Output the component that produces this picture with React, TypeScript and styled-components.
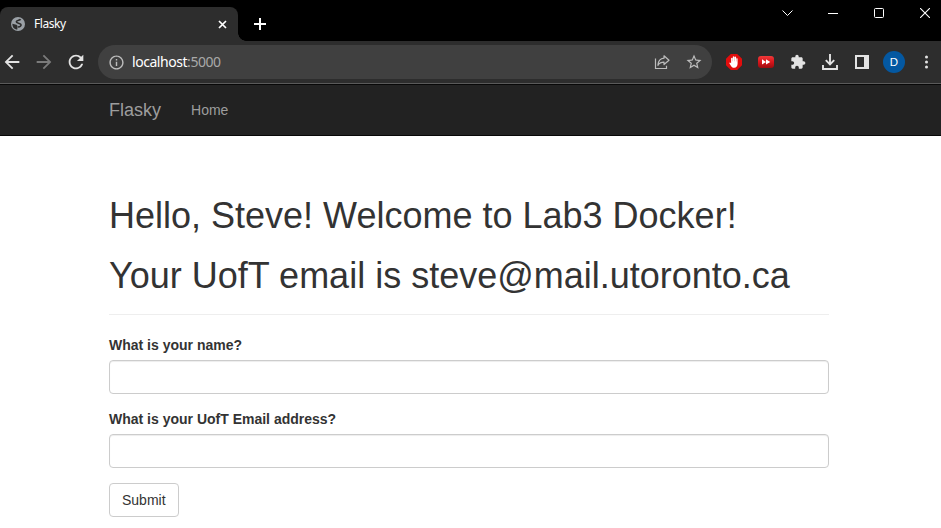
import React from "react";
import styled, { createGlobalStyle } from "styled-components";

const GlobalStyle = createGlobalStyle`
  *, *::before, *::after { box-sizing: border-box; }
  html, body { margin: 0; background: #fff; }
  body {
    height: 528px;
    overflow: hidden;
    font-family: "Liberation Sans", Arial, sans-serif;
    font-size: 14px;
    line-height: 1.42857143;
    color: #333;
  }
  svg { display: block; flex: none; }
`;

const Browser = styled.div`
  display: flex;
  flex-direction: column;
  font-family: "Noto Sans", sans-serif;
`;

const TabStrip = styled.div`
  display: flex;
  align-items: flex-start;
  height: 41px;
  background: #000;
  color: #fff;
`;

const Tab = styled.div`
  position: relative;
  display: flex;
  align-items: center;
  width: 238px;
  height: 34px;
  margin-top: 7px;
  padding: 0 10px 0 11px;
  border-radius: 8px 8px 0 0;
  background: #2d2d2d;
  &::after {
    content: "";
    position: absolute;
    left: 100%;
    bottom: 0;
    width: 8px;
    height: 8px;
    background: radial-gradient(circle at 100% 0, transparent 7.5px, #2d2d2d 8px);
  }
`;

const TabTitle = styled.span`
  flex: 1;
  margin-left: 9px;
  font-size: 12px;
  line-height: 16px;
  letter-spacing: -0.45px;
`;

const IconButton = styled.button<{ $width?: number; $height?: number }>`
  display: flex;
  align-items: center;
  justify-content: center;
  flex: none;
  width: ${(p) => p.$width ?? 32}px;
  height: ${(p) => p.$height ?? 32}px;
  padding: 0;
  border: 0;
  background: none;
  color: inherit;
`;

const NewTab = styled(IconButton)`
  margin: 8px 0 0 6px;
`;

const WindowControls = styled.div`
  display: flex;
  margin-left: auto;
  margin-right: -7px;
`;

const Toolbar = styled.div`
  display: flex;
  align-items: center;
  height: 43px;
  padding-left: 92px;
  background: #2d2d2d;
  border-bottom: 1px solid #5a5a5a;
  color: #e3e3e3;
`;

const Navigation = styled.div`
  display: flex;
  flex: none;
  width: 96px;
  margin-left: -96px;
`;

const ForwardButton = styled(IconButton)`
  color: #7b7b7b;
`;

const AddressBar = styled.div`
  display: flex;
  align-items: center;
  flex: none;
  width: 614px;
  height: 34px;
  margin: 0 6px;
  padding: 0 2px 0 9.5px;
  border-radius: 17px;
  background: #404040;
  color: #bdbdbd;
`;

const Url = styled.span`
  flex: 1;
  margin-left: 7.5px;
  font-size: 14px;
  line-height: 20px;
  letter-spacing: -0.45px;
  color: #a9a9a9;
`;

const Host = styled.span`
  color: #fff;
`;

const Avatar = styled.span`
  display: flex;
  align-items: center;
  justify-content: center;
  width: 22px;
  height: 22px;
  border-radius: 50%;
  background: #0458a1;
  color: #fff;
  font-size: 11.5px;
  line-height: 22px;
`;

const Navbar = styled.nav`
  height: 52px;
  margin-bottom: 20px;
  border: solid #080808;
  border-width: 1px 0;
  background: #222;
`;

const Container = styled.div`
  width: 720px;
  margin-left: 109px;
`;

const NavRow = styled(Container)`
  display: flex;
  align-items: center;
  gap: 30px;
  height: 50px;
  color: #9d9d9d;
`;

const Brand = styled.a`
  font-size: 18px;
  line-height: 20px;
`;

const NavLink = styled.a`
  line-height: 20px;
`;

const Content = styled(Container)`
  display: flow-root;
`;

const PageHeader = styled.header`
  margin: 40px 0 20px;
  padding-bottom: 9px;
  border-bottom: 1px solid #eee;
`;

const Heading = styled.h1`
  margin: 20px 0 10px;
  font-size: 36px;
  font-weight: 500;
  line-height: 1.1;
`;

const Field = styled.div`
  margin-bottom: 15px;
`;

const Label = styled.label`
  display: block;
  margin-bottom: 5px;
  font-weight: 700;
`;

const TextInput = styled.input`
  display: block;
  width: 100%;
  height: 34px;
  padding: 6px 12px;
  border: 1px solid #ccc;
  border-radius: 4px;
  background: #fff;
  box-shadow: inset 0 1px 1px rgba(0, 0, 0, 0.075);
  font: inherit;
`;

const SubmitButton = styled.button`
  height: 34px;
  padding: 6px 12px;
  border: 1px solid #ccc;
  border-radius: 4px;
  background: #fff;
  color: #333;
  font: inherit;
`;

const Glyph = ({ d, size }: { d: string; size: number }) => (
  <svg width={size} height={size} viewBox="0 0 24 24" fill="currentColor">
    <path d={d} />
  </svg>
);

const paths = {
  back: "M20 11H7.83l5.59-5.59L12 4l-8 8 8 8 1.41-1.41L7.83 13H20v-2z",
  forward: "M12 4l-1.41 1.41L16.17 11H4v2h12.17l-5.58 5.59L12 20l8-8z",
  reload:
    "M17.65 6.35C16.2 4.9 14.21 4 12 4c-4.42 0-7.99 3.58-7.99 8s3.57 8 7.99 8c3.73 0 6.84-2.55 7.73-6h-2.08c-.82 2.33-3.04 4-5.65 4-3.31 0-6-2.69-6-6s2.69-6 6-6c1.66 0 3.14.69 4.22 1.78L13 11h7V4l-2.35 2.35z",
  info: "M11 7h2v2h-2zm0 4h2v6h-2zm1-9C6.48 2 2 6.48 2 12s4.48 10 10 10 10-4.48 10-10S17.52 2 12 2zm0 18c-4.41 0-8-3.59-8-8s3.59-8 8-8 8 3.59 8 8-3.59 8-8 8z",
  star: "M22 9.24l-7.19-.62L12 2 9.19 8.63 2 9.24l5.46 4.73L5.82 21 12 17.27 18.18 21l-1.63-7.03L22 9.24zM12 15.4l-3.76 2.27 1-4.28-3.32-2.88 4.38-.38L12 6.1l1.71 4.04 4.38.38-3.32 2.88 1 4.28L12 15.4z",
  puzzle:
    "M20.5 11H19V7c0-1.1-.9-2-2-2h-4V3.5C13 2.12 11.88 1 10.5 1S8 2.12 8 3.5V5H4c-1.1 0-1.99.9-1.99 2v3.8H3.5c1.49 0 2.7 1.21 2.7 2.7s-1.21 2.7-2.7 2.7H2V20c0 1.1.9 2 2 2h3.8v-1.5c0-1.49 1.21-2.7 2.7-2.7 1.49 0 2.7 1.21 2.7 2.7V22H17c1.1 0 2-.9 2-2v-4h1.5c1.38 0 2.5-1.12 2.5-2.5S21.88 11 20.5 11z",
};

const GlobeIcon = () => (
  <svg width="14" height="14" viewBox="0 0 14 14">
    <circle cx="7" cy="7" r="7" fill="#9aa0a6" />
    <path
      d="M9.6 2.2C8.7 3.5 5.3 2.9 5.3 4.8c0 1.7 3.9 1 4.6 2.600.5 1.500-.8 2.600-2.800 2.500"
      fill="none"
      stroke="#2d2d2d"
      strokeWidth="1.6"
    />
    <path d="M1.3 6.7 5.4 7.7Q7 8.4 6.6 10L6.2 12.7Q1.400 12 1.300 6.700z" fill="#2d2d2d" />
  </svg>
);

const ShareIcon = () => (
  <svg width="16" height="16" viewBox="0 0 16 16" fill="none" stroke="currentColor" strokeWidth="1.2">
    <path d="M1.5 4.5v10h11v-2.7" />
    <path d="M10 1.8 15 6.2l-5 4.300V8.200C7 8.200 5.200 9.300 3.900 11.300 4.200 7.200 6.600 4.500 10 4.200z" strokeLinejoin="round" />
  </svg>
);

const BlockerIcon = () => (
  <svg width="16" height="16" viewBox="0 0 16 16">
    <path d="M4.8 0h6.4L16 4.8v6.4L11.2 16H4.8L0 11.2V4.8z" fill="#e20d0d" />
    <path
      d="M5.1 9.2V4.2q.75-.8 1.5 0v3h.2V2.8q.8-.9 1.6 0v4.4h.2V3q.8-.8 1.5 0v4.6h.2V4.5q.7-.7 1.3 0v5.1c0 2.6-1.2 4.2-3.4 4.2-1.7 0-2.6-.9-3.5-2.3L3.2 9q.7-1.2 1.9.2z"
      fill="#fff"
    />
  </svg>
);

const FastForwardIcon = () => (
  <svg width="16" height="14" viewBox="0 0 16 14">
    <defs>
      <linearGradient id="ffRed" x1="0" y1="0" x2="0" y2="1">
        <stop offset="0" stopColor="#f03a3a" />
        <stop offset=".5" stopColor="#d8151b" />
        <stop offset="1" stopColor="#9c0c10" />
      </linearGradient>
    </defs>
    <rect y="1" width="16" height="12" rx="3" fill="url(#ffRed)" />
    <path d="M4 4.3 8 6.9l-4 2.6zM8 4.3l4.3 2.6L8 9.5z" fill="#fff" />
  </svg>
);

const DownloadIcon = () => (
  <svg width="16" height="16" viewBox="0 0 16 16" fill="none" stroke="currentColor" strokeWidth="1.9">
    <path d="M8 0v10M3.8 6.2 8 10.4l4.2-4.2M1 11v4h14v-4" />
  </svg>
);

const SidePanelIcon = () => (
  <svg width="14" height="14" viewBox="0 0 14 14" fill="currentColor" fillRule="evenodd">
    <path d="M0 0h14v14H0zM2 2v10h7V2z" />
  </svg>
);

const MenuIcon = () => (
  <svg width="4" height="14" viewBox="0 0 4 14" fill="currentColor">
    <circle cx="2.5" cy="2" r="1.5" />
    <circle cx="2.5" cy="7" r="1.5" />
    <circle cx="2.5" cy="12" r="1.5" />
  </svg>
);

const LineIcon = ({ d, size, weight }: { d: string; size: number; weight: number }) => (
  <svg width={size} height={size} viewBox={`0 0 ${size} ${size}`} fill="none" stroke="currentColor" strokeWidth={weight}>
    <path d={d} />
  </svg>
);

const fields = ["What is your name?", "What is your UofT Email address?"];

export default function App() {
  return (
    <>
      <GlobalStyle />
      <Browser>
        <TabStrip>
          <Tab>
            <GlobeIcon />
            <TabTitle>Flasky</TabTitle>
            <IconButton $width={12} $height={16} aria-label="Close tab">
              <LineIcon d="M1 1l7 7M8 1l-7 7" size={9} weight={1.7} />
            </IconButton>
          </Tab>
          <NewTab aria-label="New tab">
            <LineIcon d="M6 0v12M0 6h12" size={12} weight={2} />
          </NewTab>
          <WindowControls>
            <IconButton $width={46} $height={26} aria-label="Search tabs">
              <LineIcon d="M.5 2.5 5.5 7.5l5-5" size={11} weight={1} />
            </IconButton>
            <IconButton $width={46} $height={26} aria-label="Minimize">
              <LineIcon d="M0 5.5h10" size={10} weight={1} />
            </IconButton>
            <IconButton $width={46} $height={26} aria-label="Maximize">
              <svg width="10" height="10" viewBox="0 0 10 10" fill="none" stroke="currentColor">
                <rect x=".5" y=".5" width="9" height="9" rx="1" />
              </svg>
            </IconButton>
            <IconButton $width={46} $height={26} aria-label="Close">
              <LineIcon d="M0 0l10 10M10 0 0 10" size={10} weight={1.1} />
            </IconButton>
          </WindowControls>
        </TabStrip>
        <Toolbar>
          <Navigation>
            <IconButton aria-label="Back">
              <Glyph d={paths.back} size={22} />
            </IconButton>
            <ForwardButton aria-label="Forward">
              <Glyph d={paths.forward} size={22} />
            </ForwardButton>
            <IconButton aria-label="Reload">
              <Glyph d={paths.reload} size={22} />
            </IconButton>
          </Navigation>
          <AddressBar>
            <Glyph d={paths.info} size={17} />
            <Url>
              <Host>localhost</Host>:5000
            </Url>
            <IconButton aria-label="Share">
              <ShareIcon />
            </IconButton>
            <IconButton aria-label="Bookmark">
              <Glyph d={paths.star} size={18} />
            </IconButton>
          </AddressBar>
          <IconButton aria-label="Ad blocker">
            <BlockerIcon />
          </IconButton>
          <IconButton aria-label="Video skipper">
            <FastForwardIcon />
          </IconButton>
          <IconButton aria-label="Extensions">
            <Glyph d={paths.puzzle} size={16} />
          </IconButton>
          <IconButton aria-label="Downloads">
            <DownloadIcon />
          </IconButton>
          <IconButton aria-label="Side panel">
            <SidePanelIcon />
          </IconButton>
          <IconButton aria-label="Profile">
            <Avatar>D</Avatar>
          </IconButton>
          <IconButton aria-label="Menu">
            <MenuIcon />
          </IconButton>
        </Toolbar>
      </Browser>
      <Navbar>
        <NavRow>
          <Brand>Flasky</Brand>
          <NavLink>Home</NavLink>
        </NavRow>
      </Navbar>
      <Content>
        <PageHeader>
          <Heading>Hello, Steve! Welcome to Lab3 Docker!</Heading>
          <Heading>Your UofT email is steve@mail.utoronto.ca</Heading>
        </PageHeader>
        {fields.map((label, i) => (
          <Field key={label}>
            <Label htmlFor={`field-${i}`}>{label}</Label>
            <TextInput id={`field-${i}`} type="text" />
          </Field>
        ))}
        <SubmitButton>Submit</SubmitButton>
      </Content>
    </>
  );
}
